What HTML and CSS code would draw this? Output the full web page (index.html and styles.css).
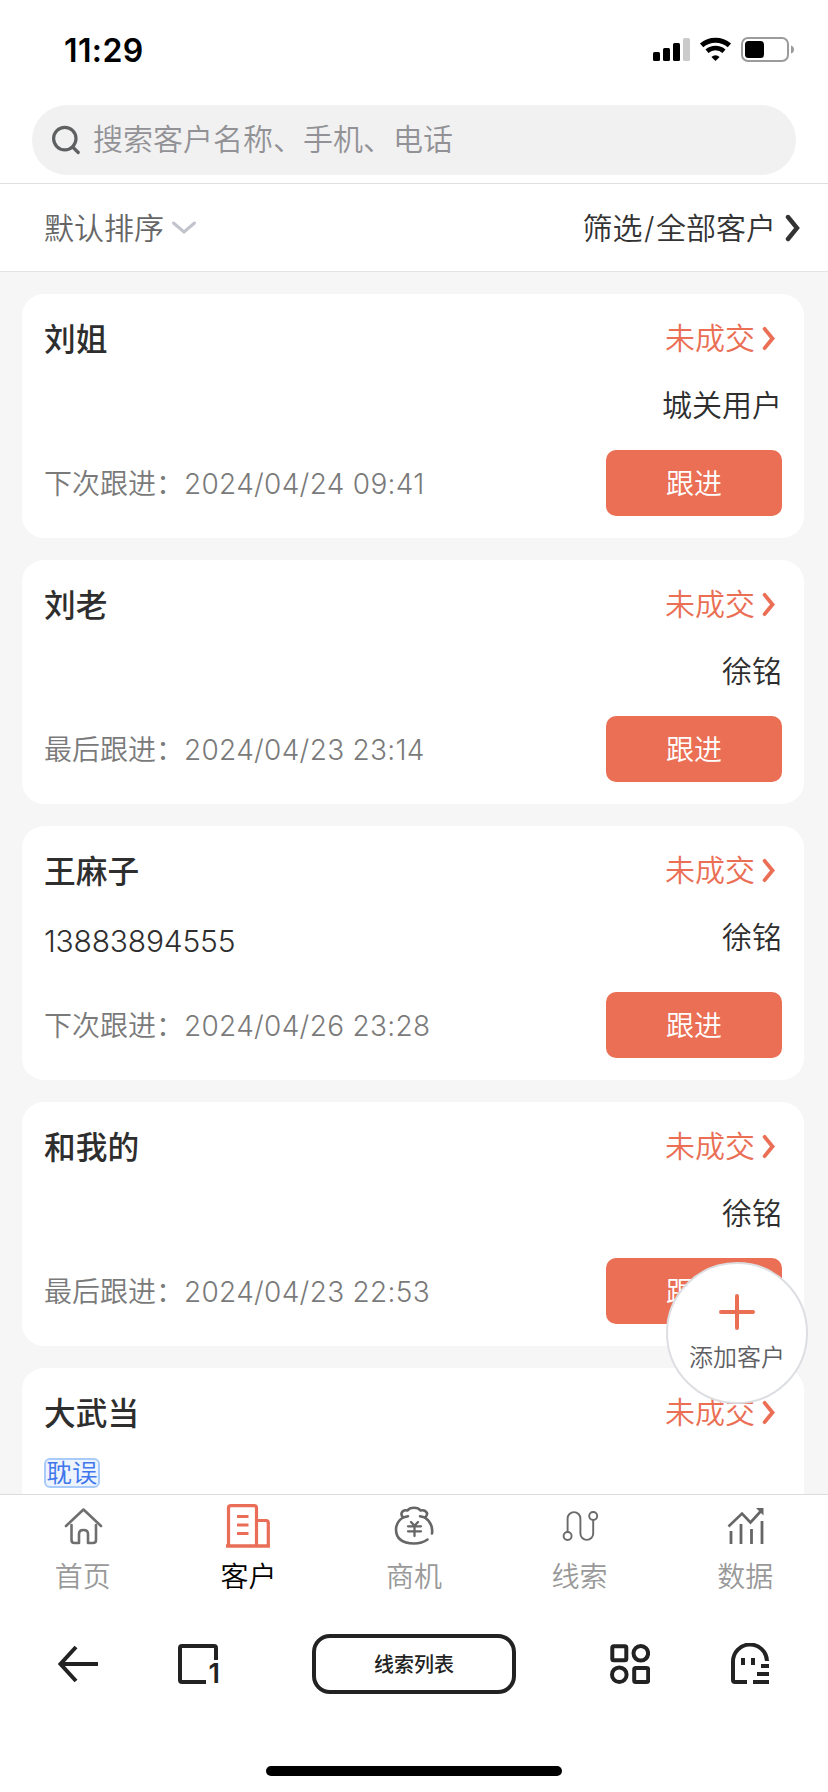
FILE: index.html
```html
<!DOCTYPE html>
<html lang="zh-CN">
<head>
<meta charset="utf-8">
<title>客户</title>
<link rel="stylesheet" href="styles.css">
</head>
<body>
<svg class="defs" aria-hidden="true">
  <symbol id="chevron" viewBox="0 0 16 28"><path d="M3 3 L12 14 L3 25" fill="none" stroke="currentColor" stroke-width="4.4" stroke-linecap="round" stroke-linejoin="miter"/></symbol>
</svg>
<div class="phone">
  <header class="status-bar">
    <span class="clock">11:29</span>
    <svg class="status-icons" width="142" height="26" viewBox="0 0 142 26">
      <rect x="0" y="15" width="7" height="9" rx="1.5"/>
      <rect x="10" y="11" width="7" height="13" rx="1.5"/>
      <rect x="20" y="6" width="7" height="18" rx="1.5"/>
      <rect x="30" y="1" width="7" height="23" rx="1.5" fill="#cbcbcb"/>
      <path d="M48.6 8.4 A21 21 0 0 1 76.4 8.4" fill="none" stroke="#000" stroke-width="5"/>
      <path d="M54 14.2 A13 13 0 0 1 71 14.2" fill="none" stroke="#000" stroke-width="4.6"/>
      <path d="M62.5 24 L58.4 19.9 A6.2 6.2 0 0 1 66.6 19.9 Z"/>
      <rect x="89" y="1" width="46" height="23" rx="6" fill="none" stroke="#9b9b9b" stroke-width="2"/>
      <rect x="92" y="4" width="19" height="17" rx="3.5"/>
      <path d="M138 8.500 Q141 9.500 141 12.500 Q141 15.500 138 16.500 Z" fill="#9b9b9b"/>
    </svg>
  </header>

  <div class="search-wrap">
    <div class="search">
      <svg width="30" height="30" viewBox="0 0 30 30" fill="none" stroke="#5f6062" stroke-width="3.2" stroke-linecap="round"><circle cx="12.800" cy="13.600" r="11.200"/><path d="M20.700 22 L26.200 27.500"/></svg>
      <span>搜索客户名称、手机、电话</span>
    </div>
  </div>

  <div class="filter-bar">
    <div class="sort"><span>默认排序</span><svg width="26" height="16" viewBox="0 0 26 16" fill="none" stroke="#c1c3cd" stroke-width="3" stroke-linecap="round"><path d="M2.500 3 L13 12 L23.500 3"/></svg></div>
    <div class="filter"><span>筛选<span class="slash">/</span>全部客户</span><svg width="16" height="28"><use href="#chevron"/></svg></div>
  </div>

  <main class="list">
    <article class="card">
      <div class="card-head"><h2>刘姐</h2><span class="state"><span>未成交</span><svg width="14" height="25"><use href="#chevron"/></svg></span></div>
      <div class="card-mid"><span class="phone-no"></span><span class="owner">城关用户</span></div>
      <div class="card-foot"><span class="follow">下次跟进：<time>2024/04/24 09:41</time></span><button class="btn">跟进</button></div>
    </article>
    <article class="card">
      <div class="card-head"><h2>刘老</h2><span class="state"><span>未成交</span><svg width="14" height="25"><use href="#chevron"/></svg></span></div>
      <div class="card-mid"><span class="phone-no"></span><span class="owner">徐铭</span></div>
      <div class="card-foot"><span class="follow">最后跟进：<time>2024/04/23 23:14</time></span><button class="btn">跟进</button></div>
    </article>
    <article class="card">
      <div class="card-head"><h2>王麻子</h2><span class="state"><span>未成交</span><svg width="14" height="25"><use href="#chevron"/></svg></span></div>
      <div class="card-mid tall"><span class="phone-no">13883894555</span><span class="owner">徐铭</span></div>
      <div class="card-foot"><span class="follow">下次跟进：<time>2024/04/26 23:28</time></span><button class="btn">跟进</button></div>
    </article>
    <article class="card">
      <div class="card-head"><h2>和我的</h2><span class="state"><span>未成交</span><svg width="14" height="25"><use href="#chevron"/></svg></span></div>
      <div class="card-mid"><span class="phone-no"></span><span class="owner">徐铭</span></div>
      <div class="card-foot"><span class="follow">最后跟进：<time>2024/04/23 22:53</time></span><button class="btn">跟进</button></div>
    </article>
    <article class="card">
      <div class="card-head"><h2>大武当</h2><span class="state"><span>未成交</span><svg width="14" height="25"><use href="#chevron"/></svg></span></div>
      <div class="card-mid"><span class="tag">耽误</span></div>
    </article>
  </main>

  <nav class="tabs">
    <a class="tab">
      <svg width="44" height="44" viewBox="0 0 44 44" fill="none" stroke="#6f6f6f" stroke-width="2.600" stroke-linecap="round" stroke-linejoin="round"><path d="M5 22 L22.500 5.500 L40 22"/><path d="M10.500 21 V36 Q10.500 39 13.500 39 H18 V30 Q18 26 22.500 26 Q27 26 27 30 V39 H32 Q35 39 35 36 V21"/></svg>
      <span>首页</span>
    </a>
    <a class="tab active">
      <svg width="44" height="44" viewBox="0 0 44 44" fill="none" stroke="#ea6d57" stroke-width="3.200"><path d="M0 42 H44" stroke-width="3.400"/><path d="M2.500 42 V4 Q2.500 1.600 5 1.600 H28 Q30.500 1.600 30.500 4 V42"/><path d="M30.500 16.500 H40 Q42.300 16.500 42.300 19 V42"/><path d="M11 12.500 H22.500 M11 21 H22.500 M11 29.500 H22.500"/></svg>
      <span>客户</span>
    </a>
    <a class="tab">
      <svg width="44" height="44" viewBox="0 0 44 44" fill="none" stroke="#666" stroke-width="2.600" stroke-linecap="round" stroke-linejoin="round"><path d="M35.500 35.500 Q30 39.500 22 39.500 Q4 39 4 25.500 Q4.200 18 11 13.500 Q9 11.500 9.600 9 Q11 5.500 15.500 6.500 Q17.500 3.800 22 3.800 Q26.500 3.800 28.500 6.500 Q33 5.500 35 9 Q35.500 11.500 33 13.500 Q41.500 20 40 29.500"/><path d="M11 13.500 L16 12.300 M28 12.300 L33 13.500"/><path d="M19 18 L22.500 21.800 L26 18 M16 22.300 H29 M16 27.300 H29 M22.500 22 V32" stroke-width="2.300"/></svg>
      <span>商机</span>
    </a>
    <a class="tab">
      <svg width="44" height="44" viewBox="0 0 44 44" fill="none" stroke="#6a6a6a" stroke-width="1.900"><circle cx="9.600" cy="32" r="4"/><circle cx="35.200" cy="12" r="4"/><path d="M9.600 28 V14.500 A6.400 6.400 0 0 1 22.400 14.500 V29.500 A6.400 6.400 0 0 0 35.200 29.500 V16"/></svg>
      <span>线索</span>
    </a>
    <a class="tab">
      <svg width="44" height="44" viewBox="0 0 44 44" fill="none" stroke="#666" stroke-width="2.800"><path d="M5.500 22.500 L19 9.500 L27.500 18.500 L38 7" stroke-width="2.600"/><path d="M33 4 H40.500 V11.500 Z" fill="#666" stroke="none"/><path d="M8 27 V40 M18 20 V40 M28.500 25 V40 M39 17 V40" stroke-width="2.800"/></svg>
      <span>数据</span>
    </a>
  </nav>

  <footer class="browser-bar">
    <svg width="40" height="42" viewBox="0 0 40 42" fill="none" stroke="#222" stroke-width="4"><path d="M40 21 H3"/><path d="M18 4 L2.500 21 L18 38"/></svg>
    <div class="windows">
      <svg width="40" height="40" viewBox="0 0 40 40"><path d="M28 38 H4 Q2 38 2 36 V4 Q2 2 4 2 H36 Q38 2 38 4 V16" fill="none" stroke="#222" stroke-width="4"/></svg>
      <span class="count">1</span>
    </div>
    <div class="page-title">线索列表</div>
    <svg width="40" height="40" viewBox="0 0 40 40" fill="none" stroke="#222" stroke-width="4"><rect x="2.300" y="2.300" width="14" height="14" rx="1.500"/><circle cx="30.800" cy="9.300" r="7.300"/><circle cx="9.300" cy="30.700" r="7.300"/><rect x="24.200" y="24" width="14" height="14" rx="1.500"/></svg>
    <svg width="40" height="42" viewBox="0 0 40 42" fill="none" stroke="#222" stroke-width="4"><path d="M17 39 H5 Q3 39 3 37 V19 A17 17 0 0 1 37 18 M31 23 H39 M27 31 H39 M23 39 H39"/><path d="M13 15 V22 M23 15 V22"/></svg>
  </footer>
  <div class="home-indicator"></div>

  <div class="fab">
    <svg width="36" height="36" viewBox="0 0 36 36" stroke="#ea6f55" stroke-width="4" stroke-linecap="round"><path d="M18 2 V34 M2 18 H34"/></svg>
    <span>添加客户</span>
  </div>
</div>
</body>
</html>
```

FILE: styles.css
```css
* { box-sizing: border-box; }

body {
  margin: 0;
  font-family: Inter, "Noto Sans CJK SC DemiLight", "Noto Sans CJK SC", sans-serif;
  font-weight: 350;
  color: #2e2e2e;
}

svg { display: block; flex: none; }
.defs { position: absolute; width: 0; height: 0; }

.phone {
  position: relative;
  display: flex;
  flex-direction: column;
  width: 828px;
  height: 1792px;
  background: #fff;
  overflow: hidden;
}

.status-bar {
  display: flex;
  justify-content: space-between;
  height: 105px;
  padding: 37px 33px 0 64px;
}
.clock {
  font-size: 32px;
  line-height: 27px;
  font-weight: 600;
  letter-spacing: 0.4px;
  color: #000;
}

.search-wrap {
  height: 79px;
  padding: 0 32px;
  border-bottom: 1px solid #dfdfdf;
}
.search {
  display: flex;
  align-items: center;
  gap: 11px;
  height: 70px;
  padding-left: 20px;
  border-radius: 35px;
  background: #f1f1f1;
  font-size: 30px;
  line-height: 70px;
  color: #929296;
}
.search span { margin-top: -2px; }

.filter-bar {
  display: flex;
  justify-content: space-between;
  align-items: center;
  height: 88px;
  padding: 0 27px 0 44px;
  border-bottom: 1px solid #e3e3e3;
  font-size: 30px;
}
.sort, .filter { display: flex; align-items: center; }
.sort { gap: 7px; color: #666; }
.filter { gap: 9px; color: #333; }
.sort > span, .filter > span { padding-bottom: 4px; }
.slash { padding: 0 1.500px; }

.list {
  flex: 1;
  display: flex;
  flex-direction: column;
  gap: 22px;
  min-height: 0;
  padding: 22px 24px 0 22px;
  background: #f6f6f6;
  overflow: hidden;
}
.card {
  flex: none;
  padding: 22px;
  border-radius: 22px;
  background: #fff;
}
.card-head, .card-mid, .card-foot {
  display: flex;
  justify-content: space-between;
}
.card-head {
  align-items: center;
  height: 44px;
}
.card-head h2 {
  margin: 0;
  padding-bottom: 2px;
  font-family: "Noto Sans CJK SC", sans-serif;
  font-size: 31.700px;
  line-height: 42px;
  font-weight: 500;
}
.state {
  display: flex;
  align-items: center;
  gap: 7px;
  padding-right: 6px;
  font-size: 30px;
  color: #ea6f55;
}
.state > span { padding-bottom: 4px; }
.card-mid { height: 90px; }
.card-mid.tall { height: 100px; }
.owner, .phone-no {
  padding-top: 24px;
  font-size: 30px;
  line-height: 42px;
}
.phone-no { padding-top: 28px; letter-spacing: -0.2px; }
.card-foot { align-items: center; }
.follow {
  padding-bottom: 2px;
  font-size: 28px;
  color: #7a7a7a;
}
.follow time { letter-spacing: 0.3px; }
.btn {
  width: 176px;
  height: 66px;
  padding: 0 0 2px;
  border: 0;
  border-radius: 10px;
  background: #ea6f55;
  font: inherit;
  font-size: 28px;
  color: #fff;
}
.tag {
  width: 56px;
  height: 30px;
  margin-top: 24px;
  border: 2px solid #a9cbfb;
  border-radius: 6px;
  background: #edf4fe;
  font-size: 25.500px;
  line-height: 26px;
  text-align: center;
  color: #3f76ec;
}

.tabs {
  display: grid;
  grid-template-columns: repeat(5, 1fr);
  height: 116px;
  padding-top: 9px;
  border-top: 1px solid #dcdcdc;
  background: #fff;
}
.tab {
  display: flex;
  flex-direction: column;
  align-items: center;
  font-size: 28px;
  line-height: 40px;
  gap: 9px;
  color: #999;
}
.tab.active { color: #000; }

.browser-bar {
  display: flex;
  justify-content: space-between;
  align-items: center;
  height: 108px;
  padding: 0 58px;
}
.browser-bar > :nth-child(2) { margin-right: 14px; }
.browser-bar > :nth-child(4) { margin-left: 14px; }
.windows { position: relative; }
.count {
  position: absolute;
  right: -2px;
  bottom: -6px;
  font-size: 27px;
  line-height: 32px;
  font-weight: 600;
  color: #222;
}
.page-title {
  width: 204px;
  height: 60px;
  border: 4px solid #222;
  border-radius: 18px;
  font-family: "Noto Sans CJK SC", sans-serif;
  font-size: 20px;
  font-weight: 500;
  line-height: 52px;
  text-align: center;
  color: #222;
}

.home-indicator {
  width: 296px;
  height: 10px;
  margin: 48px auto 16px;
  border-radius: 5px;
  background: #000;
}

.fab {
  position: absolute;
  left: 666px;
  top: 1262px;
  display: flex;
  flex-direction: column;
  align-items: center;
  gap: 10px;
  width: 142px;
  height: 142px;
  padding-top: 30px;
  border: 2px solid #dcdee2;
  border-radius: 50%;
  background: #fff;
  font-size: 24px;
  line-height: 36px;
  color: #5f6063;
}
```
